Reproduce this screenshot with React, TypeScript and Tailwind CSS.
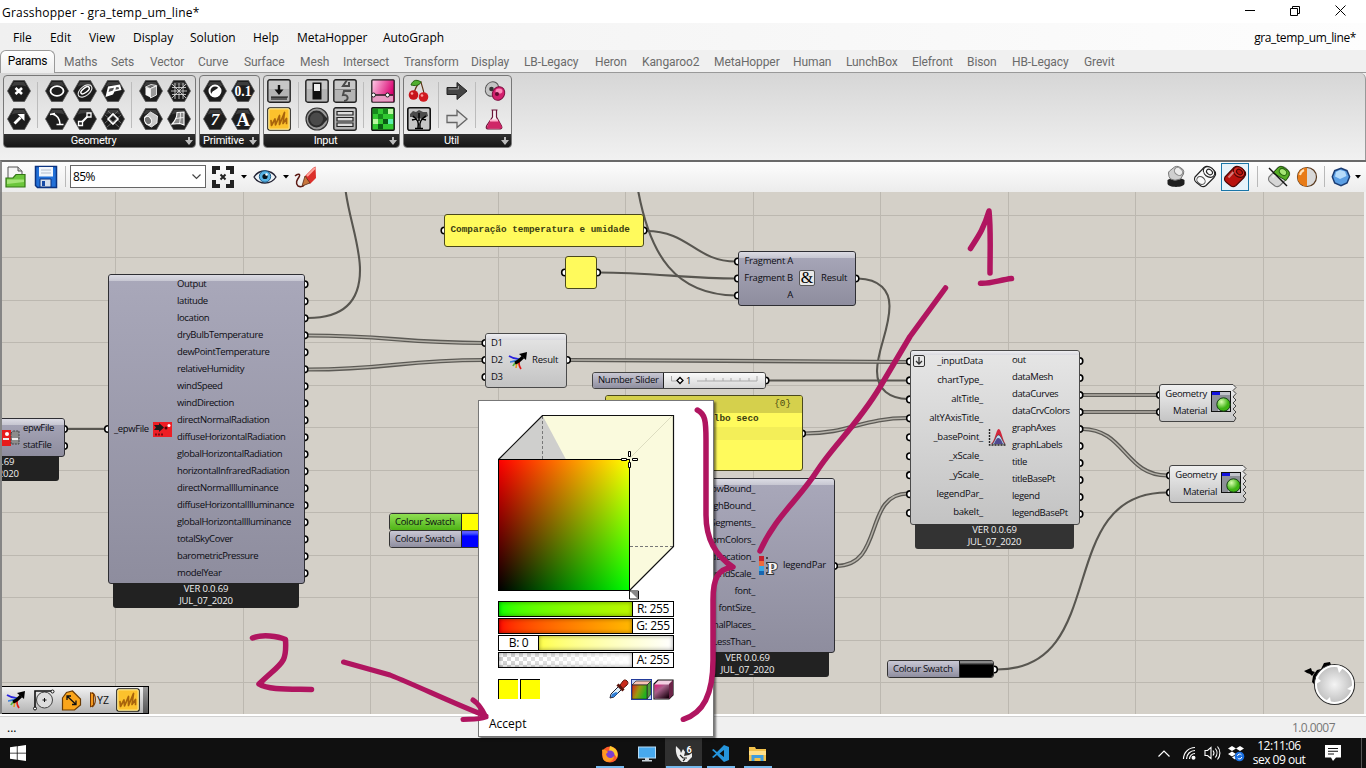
import React from "react";
import clsx from "clsx";

type Kids = { children?: React.ReactNode };

/* ---------- ribbon ---------- */

const menus: [string, string][] = [
  ["File", "w-[37px]"], ["Edit", "w-[39px]"], ["View", "w-[44px]"], ["Display", "w-[57px]"], ["Solution", "w-[63px]"],
  ["Help", "w-[44px]"], ["MetaHopper", "w-[86px]"], ["AutoGraph", "w-[70px]"],
];

const tabs: [string, string][] = [
  ["Maths", "w-[47px]"], ["Sets", "w-[39px]"], ["Vector", "w-[48px]"], ["Curve", "w-[46px]"], ["Surface", "w-[56px]"],
  ["Mesh", "w-[43px]"], ["Intersect", "w-[61px]"], ["Transform", "w-[67px]"], ["Display", "w-[53px]"],
  ["LB-Legacy", "w-[71px]"], ["Heron", "w-[47px]"], ["Kangaroo2", "w-[72px]"], ["MetaHopper", "w-[79px]"],
  ["Human", "w-[53px]"], ["LunchBox", "w-[66px]"], ["Elefront", "w-[55px]"], ["Bison", "w-[45px]"],
  ["HB-Legacy", "w-[72px]"], ["Grevit", "w-[40px]"],
];

function Hex({ children }: Kids) {
  return (
    <svg width="24" height="22" viewBox="0 0 24 22" className="block">
      <path d="M6.500 .5h11L23.500 11l-6 10.500h-11L.5 11z" fill="#1d1d1d" stroke="#555" strokeWidth=".8" />
      <path d="M7 2h10l2.500 4.500Q12 4 4.500 6.500z" fill="#3c3c3c" />
      <g fill="none" stroke="#fff" strokeWidth="1.600">{children}</g>
    </svg>
  );
}

function Tile({ children, tone = "#b4b4b4" }: Kids & { tone?: string }) {
  return (
    <svg width="24" height="24" viewBox="0 0 24 24" className="block">
      <rect x=".8" y=".8" width="22.400" height="22.400" rx="2" fill={tone} stroke="#222" strokeWidth="1.400" />
      <rect x="2" y="2" width="20" height="8" fill="#fff" opacity=".25" />
      {children}
    </svg>
  );
}

function Scribble() {
  return (
    <svg width="24" height="24" viewBox="0 0 24 24" className="block">
      <rect x=".8" y=".8" width="22.400" height="22.400" rx="2" fill="#fcc22d" stroke="#222" strokeWidth="1.300" />
      <rect x="1.800" y="1.800" width="20.400" height="20.400" rx="1" fill="none" stroke="#fff2a8" />
      <path d="M4 13.500L4.500 18.500L8 12L8.500 18L12.500 8.500L12.500 17.500L17.500 5.500L16 16.500L19.500 11.500L19.500 16.500" fill="none" stroke="#a8640c" strokeWidth="1.700" strokeLinecap="round" strokeLinejoin="round" />
    </svg>
  );
}

function Panel({ title, width, children }: Kids & { title: string; width: string }) {
  return (
    <div className={clsx("flex h-[73px] shrink-0 flex-col overflow-hidden rounded-[4px] border border-[#777] bg-linear-to-b from-[#d9d9d9] to-[#f3f3f3]", width)}>
      <div className="flex h-[58px] items-start">{children}</div>
      <div className="relative flex h-[13px] items-center justify-center bg-linear-to-b from-[#303030] to-[#161616] pr-[12px] pt-[2px] text-[11px] tracking-[-0.25px] text-white">
        <span>{title}</span>
        <svg className="absolute right-[2px] top-[3px]" width="8" height="8"><path d="M3 0h2v3h3L4 8 0 3h3z" fill="#bbb" /></svg>
      </div>
    </div>
  );
}

const Col = ({ children, className }: Kids & { className?: string }) => (
  <div className={clsx("flex w-[28px] flex-col items-center gap-[6px] pt-[4px]", className)}>{children}</div>
);
const TCol = ({ children, className }: Kids & { className?: string }) => (
  <div className={clsx("flex w-[28px] flex-col items-center gap-[4px] pt-[3px]", className)}>{children}</div>
);
const Sep = ({ className }: { className: string }) => (
  <div className={clsx("mt-[6px] h-[46px] w-px shrink-0 bg-[#bcbcbc]", className)} />
);

function Ribbon() {
  return (
    <div className="flex h-[87px] items-start gap-[3px] rounded-tr-[6px] border-r border-[#999] bg-linear-to-b from-[#d6d6d6] to-[#f1f1f1] pl-[3px] pt-[2px] font-[Roboto,sans-serif]">
      <Panel title="Geometry" width="w-[193px]">
        <Col className="ml-px">
          <Hex><path d="M8.500 8l6.500 6m0-6l-6.500 6" strokeWidth="2.600" /></Hex>
          <Hex><path d="M7.500 15.500L13.500 9.500" strokeWidth="2.800" /><path d="M10.500 6h7v7z" fill="#fff" stroke="none" /></Hex>
        </Col>
        <Sep className="ml-[4px]" />
        <Col className="ml-[5px]">
          <Hex><ellipse cx="12" cy="11" rx="6.500" ry="4.800" strokeWidth="1.800" /></Hex>
          <Hex><path d="M5 6.500l5-1M7.500 6c4 1 7 4 7.500 10M11.500 16.500h7" /></Hex>
        </Col>
        <Col>
          <Hex><ellipse cx="12" cy="11" rx="8" ry="4.600" transform="rotate(-38 12 11)" strokeWidth="1.200" stroke="#ddd" /><ellipse cx="12.500" cy="10.500" rx="5" ry="2.200" transform="rotate(-38 12 11)" strokeWidth="1.500" /></Hex>
          <Hex><path d="M8 15l8-8" strokeWidth="2" /><path d="M5.500 13.500h4v4h-4zM14 5h4v4h-4z" fill="#222" strokeWidth="1.300" /></Hex>
        </Col>
        <Col>
          <Hex><path d="M7 6.500l12-2 1.500 5.500-7 1.500-1.500 3-7.500 2.500z" fill="#fff" stroke="none" /><path d="M8.500 8.500l4.500-.8-1 2.800-4.500 1.500zM15 7.300l2.500-.4.5 2-3.500.8z" fill="#555" stroke="none" /></Hex>
          <Hex><path d="M4 7l14 12M7 3l13 12M20 7L6 19M17 3L4 15" strokeWidth=".7" stroke="#888" /><path d="M7 11l5-5 5 5-5 5z" /></Hex>
        </Col>
        <Sep className="ml-[4px]" />
        <Col className="ml-[5px]">
          <Hex><path d="M6.500 7l5 1.500v9l-5-2.500z" fill="#f4f4f4" stroke="none" /><path d="M6.500 7L12 4.500l5.500 1-6 3z" fill="#666" strokeWidth=".8" /><path d="M11.500 8.500l6-2.500v9l-6 3z" fill="#9a9a9a" strokeWidth=".8" /></Hex>
          <Hex><path d="M5.500 9l6-5 7 4-.5 7-5.500 4-5.500-3z" fill="#c9c9c9" strokeWidth=".8" /><ellipse cx="9" cy="12.500" rx="3.300" ry="4.300" transform="rotate(-30 9 12.500)" fill="#777" strokeWidth="1" /></Hex>
        </Col>
        <Col>
          <Hex><path d="M5 7.500h14M5 14.500h14M12 3v16M5 4l14 14M19 4L5 18M8 3v16M16 3v16M4 11h16" strokeWidth=".8" stroke="#e0e0e0" /></Hex>
          <Hex><path d="M10 4.500l7-.5v13l-4-1.500-8 .5c3-3 5-7 5-11.500z" fill="#8e8e8e" strokeWidth="1.100" /><path d="M13.500 4.500c0 5-.5 8-1 11M8.500 10.500l8-1" stroke="#fff" strokeWidth=".8" /></Hex>
        </Col>
      </Panel>
      <Panel title="Primitive" width="w-[61px]">
        <Col className="ml-px">
          <Hex><circle cx="12" cy="11" r="5.500" strokeWidth="2" /><path d="M16 7a5.500 5.500 0 01-8 8c1-5 4-4 8-8z" fill="#fff" stroke="none" /></Hex>
          <Hex><text x="12" y="17" textAnchor="middle" fontSize="17" fontWeight="bold" fontStyle="italic" fontFamily="Liberation Serif, serif" fill="#fff" stroke="none">7</text></Hex>
        </Col>
        <Col>
          <Hex><text x="12" y="16" textAnchor="middle" fontSize="15" fontWeight="bold" fontFamily="Liberation Serif, serif" fill="#fff" stroke="none" textLength="17" lengthAdjust="spacingAndGlyphs">0.1</text></Hex>
          <Hex><text x="12" y="17.500" textAnchor="middle" fontSize="19" fontWeight="bold" fontFamily="Liberation Serif, serif" fill="#fff" stroke="none">A</text></Hex>
        </Col>
      </Panel>
      <Panel title="Input" width="w-[137px]">
        <TCol className="ml-px">
          <Tile><path d="M4 18h17M5 18v3m2-3v3m2-3v3m2-3v3m2-3v3m2-3v3m2-3v3m2-3v3" stroke="#111" strokeWidth="1.100" /><path d="M12 6v6" stroke="#111" strokeWidth="2.400" /><path d="M7.500 10.500h9L12 16z" fill="#111" /></Tile>
          <Scribble />
        </TCol>
        <Sep className="ml-[5px]" />
        <TCol className="ml-[4px]">
          <Tile><rect x="7.500" y="3.500" width="9" height="17" fill="#111" /><rect x="9" y="5" width="6" height="7" fill="#eee" /></Tile>
          <svg width="24" height="24"><circle cx="12" cy="12" r="11" fill="#999" stroke="#333" strokeWidth="1.200" /><circle cx="11.500" cy="12" r="8.500" fill="#2b2b2b" /><path d="M18 7l5 5-5 5z" fill="#2b2b2b" /><circle cx="11.500" cy="12" r="6.500" fill="#4a4a4a" /></svg>
        </TCol>
        <TCol>
          <Tile><path d="M14 1l-4 6h7M16 3v5M18 12h-7l-1 4c6-1 6 6 1 6" fill="none" stroke="#4b4b4b" strokeWidth="2" /><path d="M2 10.500h20" stroke="#888" /></Tile>
          <Tile><path d="M4 4.500h16v3.500H4zM4 10.500h16V14H4zM4 16h16v3.500H4z" fill="#ddd" stroke="#222" strokeWidth="1.200" /></Tile>
        </TCol>
        <Sep className="ml-[4px]" />
        <TCol className="ml-[5px]">
          <svg width="24" height="24"><defs><linearGradient id="pk" x2="1" y2=".4"><stop stopColor="#ffd0ea" /><stop offset="1" stopColor="#d9006f" /></linearGradient></defs><rect x=".8" y=".8" width="22.400" height="22.400" rx="1" fill="url(#pk)" stroke="#222" strokeWidth="1.300" /><path d="M2 16.500h20v6H2z" fill="#e89cc4" /><path d="M2 16h20" stroke="#222" strokeWidth="1.500" /><circle cx="2.500" cy="16" r="2" fill="#fff" stroke="#222" /><circle cx="16.500" cy="16" r="2" fill="#fff" stroke="#222" /></svg>
          <svg width="24" height="24"><rect x=".8" y=".8" width="22.400" height="22.400" rx="1" fill="#31c931" stroke="#111" strokeWidth="1.400" /><path d="M2 2h5v5H2zM12 2h5v5h-5zM7 7h5v5H7z" fill="#158a1c" /><path d="M17 2h5v5h-5zM2 12h5v5H2z" fill="#b9f7a0" /><path d="M12 12h5v5h-5zM7 17h5v5H7z" fill="#0a5c14" /><path d="M17 12h5v5h-5z" fill="#5df0ae" /></svg>
        </TCol>
      </Panel>
      <Panel title="Util" width="w-[109px]">
        <TCol className="ml-px">
          <svg width="24" height="24"><path d="M7 15C8 8 11 5 14 3c1 5 3 8 3 13" fill="none" stroke="#5a3214" strokeWidth="1.200" /><path d="M14 3C8-1 5 3 4 6c4 1 8 1 10-3z" fill="#4fae2f" stroke="#276413" /><circle cx="6.500" cy="16" r="4.800" fill="#c8141a" /><circle cx="16.500" cy="18" r="4.800" fill="#d11a20" /><circle cx="5" cy="14.500" r="1.300" fill="#ff9d9d" /><circle cx="15" cy="16.500" r="1.300" fill="#ff9d9d" /></svg>
          <svg width="24" height="24"><rect x=".8" y=".8" width="22.400" height="22.400" rx="2" fill="#c6c6c6" stroke="#111" strokeWidth="1.600" /><path d="M3 7l3-3 3 1 3-2 4 2 4 0 1 4-2 1-4 2-3-1-3 1-4-2-2 0z" fill="#222" opacity=".75" /><path d="M11 21c1-6 0-8-5-12M13 21c-1-6 1-9 6-12M12 14V6M15 12l4 1M9 12l-4 1" fill="none" stroke="#000" strokeWidth="1.500" /><path d="M8 21.500h8" stroke="#000" strokeWidth="1.500" /></svg>
        </TCol>
        <Sep className="ml-[5px]" />
        <TCol className="ml-[4px]">
          <svg width="24" height="24"><path d="M2 8.500h10V3.500L22 12l-10 8.500v-5H2z" fill="#444" stroke="#222" /><path d="M3.500 10h10V7" fill="none" stroke="#999" /></svg>
          <svg width="24" height="24"><path d="M2 8.500h10V3.500L22 12l-10 8.500v-5H2z" fill="#e2e2e2" stroke="#666" strokeWidth="1.300" /></svg>
        </TCol>
        <Sep className="ml-[4px]" />
        <TCol className="ml-[5px]">
          <svg width="24" height="24"><ellipse cx="9" cy="10" rx="6.500" ry="7.500" transform="rotate(30 9 10)" fill="#c4c4c4" stroke="#555" /><circle cx="8.500" cy="10" r="2.300" fill="#333" /><ellipse cx="15.500" cy="14.500" rx="6" ry="7" transform="rotate(30 15.500 14.500)" fill="#d3216e" stroke="#7d0d3f" /><ellipse cx="16" cy="12" rx="3.500" ry="2.600" fill="#ff8abb" /><circle cx="14" cy="15" r="2" fill="#650830" /></svg>
          <svg width="24" height="24"><path d="M8.500 3h6M9.500 3v7L3.500 19c-1 3 1 3 3 3h9c3 0 4-1 3-3l-5-9V3" fill="#f6eef2" stroke="#6b1439" strokeWidth="1.200" /><path d="M7 13.500h8.500L19 20c0 1.500-1.500 1.700-4 1.700H6c-2 0-2.500-.7-2-2z" fill="#cf2667" /><path d="M7 13.500h8" stroke="#ffb0cd" strokeWidth="2" /></svg>
        </TCol>
      </Panel>
    </div>
  );
}

/* ---------- toolbar ---------- */

const Drum = ({ fill, cap, line = "#222" }: { fill: string; cap: string; line?: string }) => (
  <g stroke={line} strokeWidth="1.100" strokeLinejoin="round">
    <path d="M2 12L11 2.500q2-1.500 4-1l5.500 3.500q2.500 2 2 5L21 12.500l-8 8q-2.500 2-5 .5l-4.500-3.500Q.5 15.500 2 12z" fill={fill} />
    <ellipse cx="16" cy="7" rx="6.200" ry="4.800" transform="rotate(38 16 7)" fill={cap} />
    <ellipse cx="16.500" cy="7" rx="3.300" ry="2.400" transform="rotate(38 16.500 7)" fill={fill} />
    <path d="M5.500 12.500l5-5.500" stroke="#fff" opacity=".45" strokeWidth="2" />
  </g>
);

const Caret = () => <svg width="6" height="4" className="block shrink-0"><path d="M0 0h6L3 3.500z" fill="#000" /></svg>;
const VBar = ({ className }: { className: string }) => <div className={clsx("h-[21px] w-px shrink-0 bg-[#b9b9b9]", className)} />;

function Toolbar() {
  return (
    <div className="flex h-[32px] items-center border-l-2 border-t-2 border-l-[#8a8a8a] border-t-[#6a6a6a] bg-linear-to-b from-[#fdfdfd] to-[#ececec] pb-px text-[12px]">
      <svg width="22" height="24" className="ml-[3px] shrink-0"><path d="M3 2h10l4 4v9H3z" fill="#f5f5f5" stroke="#555" /><path d="M13 2v4h4" fill="#ccc" stroke="#555" /><path d="M1 13h7l3-3.500h9v12.500H1z" fill="#6cc63c" stroke="#327614" strokeWidth="1.200" /><path d="M2 14.500h17v2.500L2 19z" fill="#a5e478" /></svg>
      <svg width="24" height="24" className="ml-[7px] shrink-0"><path d="M1.500 1.500h21v21h-19l-2-2z" fill="#2270d8" stroke="#0b3380" strokeWidth="1.500" /><path d="M5 2h14v9.500H5z" fill="#f2f6fc" /><path d="M7 5h10M7 8h10" stroke="#b4bdcc" /><path d="M6 14h11v8H6z" fill="#d7dfec" stroke="#0b3380" /><path d="M8 16h3v5H8z" fill="#174aa6" /></svg>
      <VBar className="ml-[7px]" />
      <div className="ml-[4px] flex h-[23px] w-[136px] items-center justify-between border border-[#666] bg-white pl-[2px] pr-[4px] text-black">
        <span className="tracking-[-0.6px]">85%</span>
        <svg width="9" height="6"><path d="M.5.500l4 4 4-4" fill="none" stroke="#444" strokeWidth="1.200" /></svg>
      </div>
      <svg width="24" height="24" className="ml-[5px] shrink-0"><path d="M3 9V3h6M15 3h6v6M21 15v6h-6M9 21H3v-6" fill="none" stroke="#222" strokeWidth="4" /><path d="M9.500 9.500l5 5m0-5l-5 5" stroke="#222" strokeWidth="2" /></svg>
      <div className="ml-[6px]"><Caret /></div>
      <svg width="24" height="24" className="ml-[6px] shrink-0"><path d="M1 12C6 4 18 4 23 12 18 20 6 20 1 12z" fill="#eef4f8" stroke="#223" strokeWidth="1.300" /><circle cx="12" cy="11.500" r="5.700" fill="#58b3e4" stroke="#1d5d8c" /><circle cx="12" cy="11.500" r="2.600" fill="#08131c" /><circle cx="13.500" cy="9.500" r="1.200" fill="#fff" /></svg>
      <div className="ml-[6px]"><Caret /></div>
      <svg width="24" height="24" className="ml-[5px] shrink-0"><path d="M1 11c3-3 6-2 4 1s-4 6-1 9c2 1 5 1 6-1" fill="none" stroke="#5d1a14" strokeWidth="1.500" /><path d="M11 11L19 3q1-1 2.500-1.500L22 13l-6 6z" fill="#dc2f2a" /><path d="M13 11l8-8" stroke="#ffa59c" strokeWidth="2" /><path d="M11 11l5 7-8 3z" fill="#c8763c" stroke="#5a2a14" strokeWidth=".8" /></svg>
      <div className="grow" />
      <svg width="24" height="24" className="shrink-0"><path d="M3.500 15.500c0-3 17-3 17 0v3c0 4.500-17 4.500-17 0z" fill="#1f1f1f" /><path d="M4.500 8q0-1 1-2l5-4q2-1 4-.5l4 2.500q2 2 1 5l-3 5q-6 2.500-10 0-2-2-2-6z" fill="#cfcfcf" stroke="#777" /><ellipse cx="14.500" cy="6.500" rx="4.500" ry="3.500" fill="#ececec" stroke="#888" transform="rotate(40 14.500 6.500)" /></svg>
      <svg width="24" height="24" className="ml-[5px] shrink-0"><Drum fill="#fafafa" cap="#fff" /><ellipse cx="8" cy="15.500" rx="4.500" ry="3.500" transform="rotate(38 8 15.500)" fill="none" stroke="#555" /></svg>
      <div className="ml-[4px] flex h-[28px] w-[28px] shrink-0 items-center justify-center border border-[#1976a8] bg-[#e6f2fa]"><svg width="24" height="24"><Drum fill="#b8120e" cap="#d62a22" line="#4c0604" /></svg></div>
      <VBar className="ml-[8px]" />
      <svg width="24" height="24" className="ml-[9px] shrink-0"><Drum fill="#d6d6d6" cap="#eee" line="#777" /><path d="M6 8l6-6q2-1 4 0l5 3.500q2 2 1 5l-3 5z" fill="#57ad25" stroke="#245c0d" /><ellipse cx="16" cy="7" rx="4" ry="3" fill="#a5e474" stroke="#2a6b10" transform="rotate(38 16 7)" /><path d="M2 3l18 18" stroke="#111" strokeWidth="1.400" /></svg>
      <svg width="22" height="22" className="ml-[5px] shrink-0"><circle cx="11" cy="11" r="9.500" fill="#d9d9d9" stroke="#5a3b20" strokeWidth="1.200" /><path d="M11 1.500a9.500 9.500 0 000 19z" fill="#e87b17" /><path d="M8 4a7 7 0 00-4 5" stroke="#ffe1b8" strokeWidth="2" fill="none" /></svg>
      <VBar className="ml-[6px]" />
      <svg width="20" height="20" className="ml-[6px] shrink-0"><path d="M10 1.300l6 2.400 2.600 6-2.600 6.300-6 2.600-6.300-2.600L1.300 9.700l2.400-6z" fill="#5b9fe4" stroke="#1b3d74" strokeWidth="1.500" /><path d="M9 3l5 1.500L15.500 9 9 12 4 9.500 5 5z" fill="#b6dcfa" /></svg>
      <div className="ml-[4px] mr-[5px]"><Caret /></div>
    </div>
  );
}

/* ---------- graph ---------- */

const tint = {
  violet: "border-[#2e2e33] bg-linear-to-b from-[#a9a8ba] to-[#8e8d9e]",
  grey: "border-[#4a4a4a] bg-linear-to-b from-[#e6e6e6] to-[#c3c3c3]",
};

function Node({ tone, place, children, version, gloss = "h-[6px]" }: Kids & { tone: keyof typeof tint; place: string; version?: string; gloss?: string }) {
  return (
    <div className={clsx("absolute flex rounded-[3px] border text-[9.5px] tracking-[-0.38px] text-[#0c0c12]", tint[tone], place)}>
      <div className={clsx("absolute inset-x-0 top-0 rounded-t-[2px] bg-linear-to-b from-[#f2f2f6] to-[#d4d4dc] opacity-70", gloss)} />
      {children}
      {version && (
        <div className={clsx("absolute left-[4px] right-[5px] top-full flex h-[25px] flex-col items-center rounded-b-[3px] leading-[12px] tracking-[-0.15px] text-[#f0f0f0]", version)}>
          <span className="h-[12px]">VER 0.0.69</span>
          <span className="h-[12px]">JUL_07_2020</span>
        </div>
      )}
    </div>
  );
}

function Labels({ items, className, row = "h-[17px]" }: { items: string[]; className?: string; row?: string }) {
  return (
    <div className={clsx("relative flex flex-col whitespace-nowrap pt-px", className)}>
      {items.map((t) => <div key={t} className={clsx("flex shrink-0 items-center", row)}>{t}</div>)}
    </div>
  );
}

const epwOutputs = ["Output", "latitude", "location", "dryBulbTemperature", "dewPointTemperature", "relativeHumidity", "windSpeed", "windDirection", "directNormalRadiation", "diffuseHorizontalRadiation", "globalHorizontalRadiation", "horizontalInfraredRadiation", "directNormalIlluminance", "diffuseHorizontalIlluminance", "globalHorizontalIlluminance", "totalSkyCover", "barometricPressure", "modelYear"];
const chartInputs = ["_inputData", "chartType_", "altTitle_", "altYAxisTitle_", "_basePoint_", "_xScale_", "_yScale_", "legendPar_", "bakeIt_"];
const chartOutputs = ["out", "dataMesh", "dataCurves", "dataCrvColors", "graphAxes", "graphLabels", "title", "titleBasePt", "legend", "legendBasePt"];
const legendInputs = ["lowBound_", "highBound_", "numSegments_", "customColors_", "legendLocation_", "legendScale_", "font_", "fontSize_", "decimalPlaces_", "removeLessThan_"];

const single = [
  "M345.500 190C349 218 360 245 360 270C360 302 342 318 308 318",
  "M66 429H105",
  "M646 231C690 231 695 261.500 736 261.500",
  "M599 272.500C650 272.500 690 278.500 736 278.500",
  "M638 190C650 255 675 295 736 295.500",
  "M858 278.500C880 279 889.500 291 889.500 306C889.500 330 877 350 877 371C877 390 890 398.500 908 399",
  "M768 380.500H908",
  "M997 669.500C1112 669.500 1052 492.500 1167 492.500",
];
const double = [
  "M308 335.500C390 335.500 400 343 484 343",
  "M308 369.500C390 369.500 400 360 484 360",
  "M570 360C680 360 800 362 908 362",
  "M805 433.500C850 433.500 862 418 908 418",
  "M836 566C885 566 863 493.500 908 493.500",
  "M1082 429C1125 429 1125 475.500 1167 475.500",
  "M1082 395H1158",
  "M1082 412H1158",
];
const ports: [number, number][] = [
  ...epwOutputs.map((_, i): [number, number] => [304.5, 284.3 + 17 * i]),
  ...chartInputs.map((_, i): [number, number] => [910, 361.5 + 18.95 * i]),
  ...chartOutputs.map((_, i): [number, number] => [1079.5, 361 + 17 * i]),
  [64, 429], [64, 446], [108, 429], [444.5, 230.500], [643.5, 230.500], [565, 272.500], [597, 272.500],
  [738, 261.500], [738, 278.500], [738, 295.500], [855.5, 278.500], [485.5, 343], [485.5, 360], [485.5, 377], [567, 360],
  [765.5, 380.500], [802, 433.500], [834, 566], [1160, 395], [1160, 412], [1170, 475.500], [1170, 492.500], [994, 669.500],
];
const gridX = [115, 243, 370, 498, 625, 753, 880, 1008, 1135, 1263];
const gridY = [215, 257, 300, 342, 385, 427, 470, 512, 555, 597, 640, 682];

function Wires() {
  return (
    <svg className="absolute left-0 top-0" width="1364" height="522" viewBox="0 192 1364 522" fill="none">
      <path d={gridX.map((x) => `M${x}.500 192v522`).join("") + gridY.map((y) => `M0 ${y}.500h1364`).join("")} stroke="#bcb8b0" />
      {single.map((d) => <path key={d} d={d} stroke="#585650" strokeWidth="2.100" />)}
      {double.map((d) => <g key={d}><path d={d} stroke="#5c5a55" strokeWidth="4.200" /><path d={d} stroke="#b4b1a9" strokeWidth="1.500" /></g>)}
      {ports.map(([x, y]) => <circle key={`${x} ${y}`} cx={x} cy={y} r="3.300" fill="#fff" stroke="#000" strokeWidth="1.600" />)}
    </svg>
  );
}

const Comet = () => (
  <svg width="20" height="18" viewBox="0 0 20 18" className="block shrink-0" fill="none" strokeWidth="1.700">
    <path d="M1 4c3 2 6 3 10 3" stroke="#2a22e0" /><path d="M2 10c4 0 6-1 9-3" stroke="#3b7bd8" /><path d="M5 14c1-3 4-4 6-6" stroke="#50b53c" /><path d="M8 16c0-3 1-5 3-8" stroke="#e0a020" /><path d="M13 17c-2-3-3-6-1-9" stroke="#e01818" />
    <path d="M7 11c3-1 5-3 8-6" stroke="#000" strokeWidth="3.200" /><path d="M11 2l8-2-1 8z" fill="#000" />
  </svg>
);

function Viewer({ place }: { place: string }) {
  return (
    <div className={clsx("absolute flex h-[38px] w-[78px] text-[9.5px] tracking-[-0.3px] text-[#0c0c12]", place)}>
      <svg className="absolute inset-0" width="78" height="38">
        <defs><linearGradient id="vw" x2="0" y2="1"><stop stopColor="#f0f0f0" /><stop offset="1" stopColor="#c4c4c4" /></linearGradient></defs>
        <path d="M3 .5H74l3 3-3 3 3 3-3 3.500 3 3-3 3 3 3-3 3 3 3-3 3 3 3-2 3.500H3Q.5 37.500.5 35V3Q.5.500 3 .5z" fill="url(#vw)" stroke="#444" />
      </svg>
      <div className="pt-px"><Labels className="w-[48px] items-end" items={["Geometry", "Material"]} /></div>
      <svg className="relative ml-[4px] mt-[7px]" width="20" height="21"><defs><radialGradient id="ball" cx=".35" cy=".3"><stop stopColor="#d9ffb0" /><stop offset="1" stopColor="#3fb414" /></radialGradient></defs><rect x=".5" y=".5" width="19" height="20" fill="#c2c4cc" stroke="#111" /><path d="M1 4h18v6H7v10H1z" fill="#8d9098" /><path d="M1 1h8v3H1z" fill="#1212e0" /><circle cx="12.500" cy="13.500" r="6.700" fill="url(#ball)" stroke="#163f14" /></svg>
    </div>
  );
}

const Memo = ({ place, children }: Kids & { place: string }) => (
  <div className={clsx("absolute overflow-hidden rounded-[3px] border border-[#4a481c] bg-[#fffa5c] font-['Liberation_Mono',monospace] text-[9.35px] font-bold text-[#3b3d12]", place)}>{children}</div>
);

function Swatch({ place, tone, fill }: { place: string; tone: string; fill: string }) {
  return (
    <div className={clsx("absolute flex h-[18px] w-[107px] overflow-hidden rounded-[3px] border border-[#333] text-[9.5px] tracking-[-0.3px] text-[#0c0c12]", place)}>
      <div className={clsx("flex w-[72px] items-center border-r border-[#222] pl-[5px]", tone)}>Colour Swatch</div>
      <div className={clsx("grow", fill)} />
    </div>
  );
}

function Canvas() {
  return (
    <div className="relative h-[522px] overflow-hidden border-r-2 border-[#f0f0f0] bg-[#d4d0c8]">
      <Wires />
      <Node tone="violet" place="left-[-80px] top-[226px] h-[39px] w-[145px]" version="bg-[#222]">
        <div className="w-[80px]" />
        <svg className="relative mt-[11px]" width="20" height="16"><path d="M0 0h10v16H0z" fill="#e81c1c" /><path d="M10 3l2-2h6v13h-8z" fill="#8c8c8c" stroke="#444" strokeDasharray="2 1" /><circle cx="6" cy="4" r="2" fill="#fff" /><path d="M2 9h6M11 9h6" stroke="#eee" strokeWidth="2" /></svg>
        <Labels className="ml-[2px]" items={["epwFile", "statFile"]} />
      </Node>
      <Node tone="violet" place="left-[108px] top-[82px] h-[310px] w-[197px]" version="bg-[#222]">
        <div className="flex w-[64px] items-center pl-[5px]">
          <span className="w-[39px]">_epwFile</span>
          <svg className="shrink-0" width="19" height="15"><rect width="19" height="15" fill="#ee1d24" /><path d="M1 3h5V1l5 4.500L6 10V8H1l2-2.500z" fill="#1c1c1c" /><path d="M2 12.500h8" stroke="#7a0c10" strokeWidth="2" strokeDasharray="2 1" /><circle cx="13" cy="6" r="1.500" fill="#500" /><circle cx="16" cy="3.500" r="1.500" fill="#fff" /></svg>
        </div>
        <Labels className="pl-[4px]" items={epwOutputs} />
      </Node>
      <Memo place="left-[444px] top-[22px] flex h-[33px] w-[200px] items-start whitespace-pre pl-[5.500px] pt-[8px]">Comparação temperatura e umidade</Memo>
      <Memo place="left-[565px] top-[64px] h-[33px] w-[32px]" />
      <Node tone="violet" place="left-[738px] top-[59px] h-[55px] w-[118px]">
        <Labels className="w-[54px] items-end tracking-[-0.25px]" items={["Fragment A", "Fragment B", "A"]} />
        <div className="relative ml-[6px] mt-[18px] flex h-[16px] w-[16px] items-center justify-center rounded-[2px] border border-[#555] bg-[#e9e9e9] font-['Liberation_Serif',serif] text-[16px] leading-none tracking-normal text-black">&amp;</div>
        <span className="relative ml-[6px] self-center tracking-[-0.2px]">Result</span>
      </Node>
      <Node tone="grey" place="left-[485px] top-[141px] h-[55px] w-[82px]">
        <Labels className="w-[22px] pl-[5px]" items={["D1", "D2", "D3"]} />
        <div className="flex items-center gap-[4px] tracking-[-0.2px]"><Comet /><span>Result</span></div>
      </Node>
      <div className="absolute left-[592px] top-[180px] flex h-[17px] w-[174px] overflow-hidden rounded-[3px] border border-[#444] text-[9.5px] text-[#0c0c12]">
        <div className="flex w-[71px] items-center border-r border-[#222] bg-linear-to-b from-[#c9c8d4] to-[#8f8e9f] pl-[5px] tracking-[-0.28px]">Number Slider</div>
        <div className="flex grow items-center bg-linear-to-b from-[#fafafa] to-[#d6d6d6] pl-[7px]">
          <svg width="88" height="13" className="block"><path d="M.5 2v5h5M26 7h60V2M35 7V4M43 7V4M52 7V4M60 7V4M69 7V4M78 7V4" fill="none" stroke="#aaa" /><path d="M6 6.500l3-3 3 3-3 3z" fill="#fff" stroke="#000" strokeWidth="1.300" /><text x="15" y="10" fontSize="9.500" fontFamily="Open Sans, sans-serif" fill="#111">1</text></svg>
        </div>
      </div>
      <Memo place="left-[605px] top-[203px] flex h-[76px] w-[198px] flex-col">
        <div className="flex h-[17px] shrink-0 items-center justify-end bg-[#d5d04c] pr-[11px] font-normal text-[#4a4810]">{"{0}"}</div>
        <div className="flex h-[12px] items-center pl-[12.500px]">Temperatura de bulbo seco</div>
        <div className="mt-[2px] h-[13px] bg-[#f3ee58]" />
      </Memo>
      <Node tone="grey" place="left-[910px] top-[158px] h-[175px] w-[170px]" version="bg-[#333]" gloss="h-[4px]">
        <div className="w-[28px] pl-[2px] pt-[4px]"><div className="relative flex h-[12px] w-[12px] items-center justify-center rounded-[2px] border border-[#333] bg-[#e8e8e8]"><svg width="10" height="10" className="shrink-0"><path d="M5 1v7M2 5l3 3 3-3" fill="none" stroke="#333" strokeWidth="1.300" /></svg></div></div>
        <Labels className="w-[44px] items-end tracking-[-0.25px]" row="h-[18.900px]" items={chartInputs} />
        <svg className="ml-[5px] mt-[77px] shrink-0" width="19" height="18"><path d="M1.500 1v16h17" fill="none" stroke="#222" strokeWidth="1.400" strokeDasharray="2 1" /><path d="M3 16C7 13 8 2 10.500 1s4 11 7 15z" fill="#d3273c" /><path d="M4 16c3-2 4-9 6.500-9s4 7 6.500 9z" fill="#bcdcf4" stroke="#333" strokeWidth=".6" /><path d="M6 16c2-5 3-6 4.500-6s3 2 4.500 6z" fill="#504a90" /></svg>
        <Labels className="ml-[5px]" items={chartOutputs} />
      </Node>
      <Node tone="violet" place="left-[661px] top-[286px] h-[175px] w-[174px]" version="bg-[#222]">
        <div className="pt-px"><Labels className="w-[93px] items-end tracking-[-0.34px]" items={legendInputs} /></div>
        <svg className="ml-[4px] mt-[77px] shrink-0 overflow-visible" width="20" height="20"><path d="M0 0h5v5H0z" fill="#c5202e" /><path d="M0 5h5v5H0z" fill="#ee6a3c" /><path d="M0 10h5v5H0z" fill="#39a8e6" /><path d="M0 15h5v4H0z" fill="#1766b0" /><path d="M7 2h2M7 7h2M7 12h2M7 17h2" stroke="#444" strokeWidth="2" /><text x="8" y="17.500" fontSize="17" fontWeight="bold" fontFamily="Liberation Serif, serif" letterSpacing="0" fill="#f6f6f6" stroke="#333" strokeWidth="1.800" paintOrder="stroke">P</text></svg>
        <span className="ml-[4px] self-center tracking-[-0.2px]">legendPar</span>
      </Node>
      <Viewer place="left-[1159px] top-[192px]" />
      <Viewer place="left-[1169px] top-[273px]" />
      <Swatch place="left-[389px] top-[321px]" tone="bg-linear-to-b from-[#8fdf52] to-[#4eb312]" fill="bg-[#ff0]" />
      <Swatch place="left-[389px] top-[338px]" tone="bg-linear-to-b from-[#c9c8d4] to-[#8f8e9f]" fill="bg-linear-to-b from-[#5b5bff] from-10% to-[#00f] to-30%" />
      <Swatch place="left-[887px] top-[468px]" tone="bg-linear-to-b from-[#c9c8d4] to-[#8f8e9f]" fill="bg-linear-to-b from-[#888] from-10% to-black to-30%" />

      <div className="absolute left-[2px] top-[494px] flex h-[28px] w-[147px] items-center border border-l-0 border-black bg-linear-to-b from-[#f2f2f2] to-[#b4b4b4] pl-[4px]">
        <Comet />
        <svg width="22" height="22" className="ml-[7px]"><circle cx="11.500" cy="11" r="8" fill="#ddd" stroke="#444" /><path d="M2 19V2H19" fill="none" stroke="#111" strokeWidth="1.600" /><path d="M11.500 9v4M9.500 11h4" stroke="#111" /><circle cx="19.500" cy="2.500" r="1.500" fill="#fff" stroke="#111" /><circle cx="2" cy="19.500" r="1.500" fill="#fff" stroke="#111" /></svg>
        <svg width="22" height="22" className="ml-[6px]"><path d="M1.500 9l4-5.500 6-1.500 8 8v6l-6 5h-12z" fill="#fba51b" stroke="#6a3b05" strokeWidth="1.200" /><path d="M6.500 7.500l8 7.500M6 11V7h4M11 15.500h4v-4" fill="none" stroke="#111" strokeWidth="1.300" /></svg>
        <svg width="22" height="22" className="ml-[7px]"><path d="M1.500 3.500l3 1.500v11l-3 2z" fill="#f79a1c" stroke="#7a3d05" /><path d="M3 3.500c4.500 2 4.500 12 0 14.500" fill="none" stroke="#7a3d05" strokeWidth="1.200" /><text x="8" y="14.500" fontSize="10" fontFamily="Roboto, sans-serif" fill="#111">YZ</text></svg>
        <div className="ml-[5px]"><Scribble /></div>
        <div className="ml-[3px] h-full w-[5px] bg-linear-to-b from-[#999] to-[#555]" />
      </div>

      <svg className="absolute left-[1303px] top-[467px]" width="56" height="52" fill="none">
        <defs><radialGradient id="knob"><stop stopColor="#f4f4f4" /><stop offset="1" stopColor="#bdbdbd" /></radialGradient></defs>
        <path d="M1 12l7-3 1 3 3 1-3 4-2-2-3-1zM11 15l3-4 4-1 3-6 6-1 1 3-8 3-7 10-1 7-3-3 1-6z" fill="#000" />
        <circle cx="31.500" cy="25.500" r="20" fill="url(#knob)" stroke="#333" strokeWidth="1.200" />
        <circle cx="31.500" cy="25.500" r="18.500" stroke="#fff" strokeWidth="2" />
        <path d="M34 7l6 2-4 5zM13 17l5 5-5 3zM50 32l-6-2 6-4zM28 44l-5-2 4-4z" fill="#fff" />
      </svg>
    </div>
  );
}

/* ---------- colour picker ---------- */

function Channel({ label, fill, flip }: { label: string; fill: string; flip?: boolean }) {
  return (
    <div className={clsx("flex h-[16px] w-[176px] border border-black text-[12px] text-black", flip && "flex-row-reverse")}>
      <div className={clsx("grow shadow-[inset_0_0_4px_rgba(0,0,0,0.4)]", fill)} />
      <div className={clsx("flex h-full items-center justify-center border-black bg-white leading-none tracking-[-0.35px]", flip ? "w-[40px] border-r" : "w-[41px] border-l")}>{label}</div>
    </div>
  );
}

function Picker() {
  return (
    <div className="absolute left-[478px] top-[400px] flex h-[337px] w-[236px] flex-col border border-[#777] bg-white shadow-[2px_2px_2px_rgba(0,0,0,0.5)]">
      <div className="relative ml-[19px] mt-[14px] h-[185px] w-[177px]">
        <svg className="absolute left-0 top-0" width="177" height="186" viewBox="498 415 177 186" fill="none">
          <path d="M498.500 459.500L542.500 415.500H673.500V546.500L629.500 590.500V459.500z" fill="#fafadd" />
          <path d="M498.500 459.500L542.500 415.500L566 459.500z" fill="#cfcfcd" />
          <path d="M629 459L673 415" stroke="#ddddc0" />
          <path d="M542.500 416v43M630 546.500h43" stroke="#777" strokeDasharray="3 2" />
          <path d="M498.500 459.500L542.500 415.500H673.500V546.500L629.500 590.500" stroke="#111" strokeWidth="1.200" />
          <path d="M629.500 591h9v8h-9z" fill="#fff" stroke="#111" /><path d="M630 591h8v8z" fill="#888" />
        </svg>
        <div className="absolute left-0 top-[44px] h-[132px] w-[132px] border border-black bg-[linear-gradient(to_right,#000,#0f0),linear-gradient(to_bottom,#f00,#000)] bg-blend-screen" />
        <svg className="absolute left-[123px] top-[36px]" width="17" height="17" fill="#fff" stroke="#000"><path d="M7.500.500h2v5h-2zM7.500 11.500h2v5h-2zM.5 7.500h5v2h-5zM11.500 7.500h5v2h-5z" /></svg>
      </div>
      <div className="ml-[19px] mt-px flex flex-col gap-px">
        <Channel label="R: 255" fill="bg-linear-to-r from-[#0f0] to-[#bbf600]" />
        <Channel label="G: 255" fill="bg-linear-to-r from-[#f00] to-[#ffb800]" />
        <Channel flip label="B: 0" fill="bg-linear-to-r from-[#ffff48] to-white" />
        <Channel label="A: 255" fill="bg-[linear-gradient(to_right,transparent,white),repeating-conic-gradient(#d0d0d0_0_25%,#fff_0_50%)] bg-[length:auto,8px_8px]" />
      </div>
      <div className="ml-[19px] mt-[11px] flex h-[20px] w-[176px] items-start">
        <div className="h-[20px] w-[20px] border-l border-t border-black bg-[#ff0]" />
        <div className="ml-[2px] h-[20px] w-[20px] border-l border-t border-black bg-[#ff0]" />
        <svg className="ml-[69px] shrink-0" width="20" height="20"><path d="M1 19l1-4 8-8 3 3-8 8z" fill="#dff1fb" stroke="#223" /><path d="M2 18l1-3 4-2 2 1-4 4z" fill="#2e7fd8" /><path d="M8.500 5.500l6 6" stroke="#5a140c" strokeWidth="3" /><path d="M11 6l3-4c2-3 7 1 4 4l-4 3.500z" fill="#c92b1c" stroke="#5a140c" /></svg>
        <div className="ml-[2px] flex h-[21px] w-[21px] items-end border border-[#223a9a] bg-[#c3cff5]"><svg width="19" height="19"><defs><linearGradient id="c1" x2="1" y2=".4"><stop stopColor="#e02020" /><stop offset=".5" stopColor="#9a9a10" /><stop offset="1" stopColor="#1fb01f" /></linearGradient></defs><path d="M0 5l4-4h15l-4 4z" fill="#f8c3b4" stroke="#222" strokeWidth=".7" /><path d="M15 5l4-4v13l-4 5z" fill="#4d9a3c" stroke="#222" strokeWidth=".7" /><path d="M0 5h15v14H0z" fill="url(#c1)" stroke="#222" strokeWidth=".7" /></svg></div>
        <svg className="ml-px shrink-0" width="21" height="21"><defs><linearGradient id="c2" x2=".8" y2="1"><stop stopColor="#e2187c" /><stop offset=".4" stopColor="#a8608a" /><stop offset="1" stopColor="#1c0310" /></linearGradient></defs><path d="M1 5l4-4h15v15l-4 4H1z" fill="#f3cfe2" stroke="#111" strokeWidth="1.200" /><path d="M16 5l4-4v15l-4 4z" fill="#6b2448" /><path d="M1.500 5.500h14.500v14H1.500z" fill="url(#c2)" /></svg>
      </div>
      <div className="ml-[10px] mt-[16px] text-[12px] leading-[18px] text-black">Accept</div>
    </div>
  );
}

const Ink = () => (
  <svg className="pointer-events-none absolute left-0 top-0" width="1366" height="768" fill="none" stroke="#b01560" strokeWidth="6" strokeLinecap="round" strokeLinejoin="round">
    <path d="M970.500 248.500C977 238 983 231 989 211C991 230 990 250 990 273" strokeWidth="5.500" />
    <path d="M980.500 283.300C990 284 1000 280 1011.500 278.500" strokeWidth="5.500" />
    <path d="M945.500 288L910 336.500L880 387C858 424 832 447 817 471C800 498 775 517 760 551" strokeWidth="5.500" />
    <path d="M252.500 638C262 634 278 636 285.500 639.500C287 664 282 662 259 684C268 690 290 689 311.500 689.500" strokeWidth="5.500" />
    <path d="M343.500 662L390 675C420 687 450 702 486 716M473 700C478 703 482 709 486 717C478 720 470 719 463 719.500" strokeWidth="5" />
    <path d="M697.300 410C705 414 706 420 706 440V515C706 545 722 560 733 567C718 569 713 578 713 600V660C713 695 703 713 683.300 719.300" strokeWidth="5.500" />
  </svg>
);

/* ---------- taskbar ---------- */

const App1 = ({ children, line, active }: Kids & { line?: string; active?: boolean }) => (
  <div className={clsx("flex h-[30px] w-[37px] flex-col items-center", active && "bg-[#303030]")}>
    <div className="flex h-[28px] items-center pt-[3px]">{children}</div>
    {line && <div className={clsx("h-[2px] bg-[#76b9ed]", line)} />}
  </div>
);

function Taskbar() {
  return (
    <div className="flex h-[30px] items-center bg-[#101010] text-white">
      <svg width="16" height="16" className="ml-[10px] shrink-0" fill="#fff"><path d="M0 2.300l6.800-1v6.400H0zM7.600 1.200L16 0v7.700H7.600zM0 8.400h6.800v6.400l-6.800-1zM7.600 8.400H16V16l-8.400-1.200z" /></svg>
      <div className="ml-[565px] flex">
        <App1 line="w-[28px]"><svg width="18" height="18"><circle cx="9" cy="9.500" r="8" fill="#ff5a2a" /><path d="M9 1c6 2 9 6 7 12-2-5-6-4-8-7z" fill="#ffcb2f" /><circle cx="9" cy="10" r="4.500" fill="#7d3fd0" /><path d="M1 5c2-1 4 0 6 2l-2 2c1 5 6 5 8 2 0 6-8 8-11 3z" fill="#ff9a1f" /></svg></App1>
        <App1><svg width="18" height="16"><rect x=".5" y="1" width="17" height="11" fill="#47a9ee" stroke="#b8dcf5" /><path d="M7 12h4v2h3v1.500H4V14h3z" fill="#c9d3da" /></svg></App1>
        <App1 active line="w-[36px]"><svg width="18" height="18"><path d="M1 1l4 4 1 3 2-4 2 3-1 4 5-1 3-2v4l-5 5-5 0C3 14 0 9 1 1z" fill="#eee" /><path d="M5 10l3 3h4M8 16l2-2" stroke="#222" strokeWidth="1.200" fill="none" /><text x="11.500" y="7.500" fontSize="9" fontWeight="bold" fontFamily="Roboto, sans-serif" fill="#fff">6</text></svg></App1>
        <App1 line="w-[28px]"><svg width="17" height="17"><path d="M12 0l5 2v13l-5 2-7-7-3.500 3L0 12l4-3.500L0 5l1.500-1L5 7zM12 5L7.500 8.500 12 12z" fill="#2595dc" fillRule="evenodd" /></svg></App1>
        <App1 line="w-[28px]"><svg width="17" height="16"><path d="M0 1h6l1 2h10v12H0z" fill="#f2c14b" /><path d="M0 5h17v4H0z" fill="#ffe08a" /><path d="M2.500 15V9h12v6h-3v-3h-6v3z" fill="#3f9ddd" /></svg></App1>
      </div>
      <div className="grow" />
      <svg width="12" height="7" className="shrink-0"><path d="M.5 6.500L6 1l5.500 5.500" fill="none" stroke="#fff" strokeWidth="1.200" /></svg>
      <svg width="14" height="14" className="ml-[12px] shrink-0" fill="none" stroke="#fff" strokeWidth="1.200"><path d="M1.500 13A11.500 11.500 0 0113 1.500M4.500 13A8.500 8.500 0 0113 4.500M7.500 13A5.500 5.500 0 0113 7.500" /><circle cx="11.500" cy="11.700" r="1.400" fill="#fff" /></svg>
      <svg width="17" height="16" className="ml-[8px] shrink-0" fill="none" stroke="#fff" strokeWidth="1.100"><path d="M1 5.500h2.500L7 2.500v11L3.500 10.500H1zM9 5.500a4 4 0 010 5M11.300 3.500a7 7 0 010 9M13.500 1.500a10 10 0 010 13" /></svg>
      <svg width="17" height="17" className="ml-[7px] shrink-0"><path d="M4 1l4 2.500L4 6 0 3.500zM12 1l4 2.500L12 6 8 3.500zM4 6.500L8 9l-4 2.500L0 9zM4 12.500l3-2 2 2-2 2z" fill="#fff" /><circle cx="11.500" cy="11.500" r="4.800" fill="#1a6fe0" /><path d="M9.500 11a2.200 2.200 0 014-1M13.700 12a2.200 2.200 0 01-4 1" fill="none" stroke="#fff" /></svg>
      <div className="ml-[7px] flex w-[54px] flex-col items-center whitespace-nowrap text-[12px] leading-[14.500px] tracking-[-0.5px]"><span>12:11:06</span><span>sex 09 out</span></div>
      <svg width="16" height="17" className="ml-[19px] shrink-0"><path d="M0 0h16v12.500H11l-3 3.500-2-3.500H0z" fill="#fff" /><path d="M3 3.500h10M3 6.200h10M3 9h6" stroke="#111" strokeWidth="1.100" /></svg>
      <div className="ml-[20px] mr-[4px] h-full w-px bg-[#555]" />
    </div>
  );
}

export default function App() {
  return (
    <div className="relative flex h-[768px] w-[1366px] flex-col overflow-hidden bg-[#f0f0f0] font-['Open_Sans',sans-serif] text-black">
      <div className="flex h-[23px] items-center justify-between bg-white pl-[2px] pr-[20px]">
        <span className="pt-[2px] text-[12px] tracking-[0.2px]">Grasshopper - gra_temp_um_line*</span>
        <svg width="103" height="12" className="-mt-[3px]" fill="none" stroke="#000"><path d="M2 6.500h10M47.500 4.500h7v7h-7zM49.500 4.500v-2h7v7h-2M92.500 1.500l10 10M102.500 1.500l-10 10" /></svg>
      </div>
      <div className="flex h-[27px] items-center bg-linear-to-r from-[#f0f0f0] to-[#fdfdfd] pl-[13px] pr-[10px] pt-[2px] text-[12px] tracking-[-0.05px]">
        {menus.map(([t, w]) => <span key={t} className={clsx("shrink-0", w)}>{t}</span>)}
        <span className="ml-auto tracking-[-0.4px]">gra_temp_um_line*</span>
      </div>
      <div className="flex h-[23px] items-end border-b border-[#999] font-[Roboto,sans-serif] text-[12px] text-[#6b6b6b]">
        <div className="-mb-px flex h-[23px] w-[55px] items-center justify-center rounded-t-[6px] border border-b-0 border-[#999] bg-linear-to-b from-white to-[#ececec] pb-[3px] tracking-[-0.3px] text-black">Params</div>
        <div className="flex h-full items-center pl-[9px] pt-[2px] tracking-[-0.1px]">
          {tabs.map(([t, w]) => <span key={t} className={clsx("shrink-0", w)}>{t}</span>)}
        </div>
      </div>
      <Ribbon />
      <Toolbar />
      <Canvas />
      <div className="flex h-[24px] items-center justify-between border-t-2 border-white bg-[#f0f0f0] pl-[7px] pr-[31px] pt-[2px] text-[12px] shadow-[inset_0_1px_0_#d0d0d0]">
        <span>...</span><span className="tracking-[-0.55px] text-[#777]">1.0.0007</span>
      </div>
      <Taskbar />
      <div className="absolute left-0 top-[192px] h-[522px] w-[2px] bg-[#858585]" />
      <Picker />
      <Ink />
    </div>
  );
}
